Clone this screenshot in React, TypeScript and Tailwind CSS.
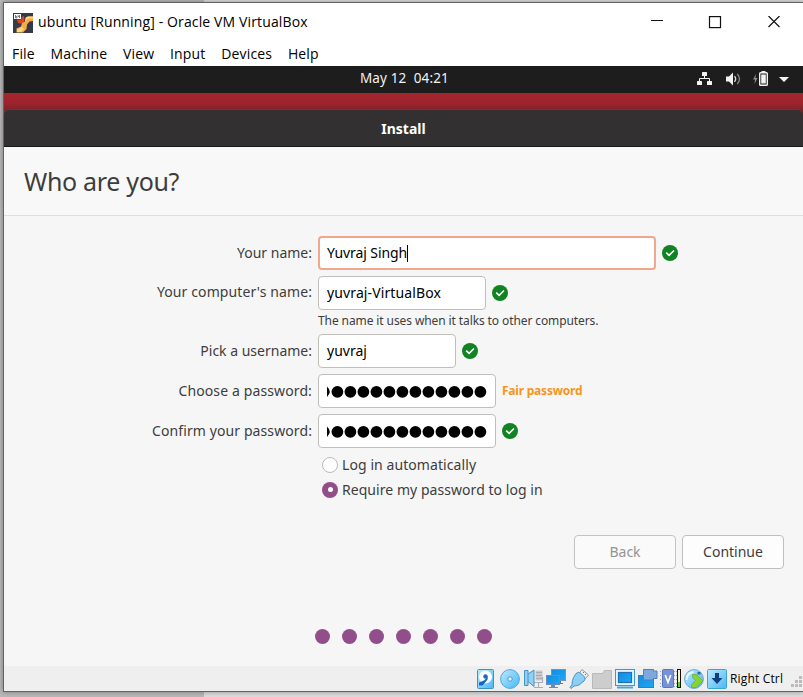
import React from "react";

const ui = "font-['Open_Sans','Noto_Sans',sans-serif]";
const ubuntu = "font-['Noto_Sans',sans-serif]";

function Check() {
  return (
    <svg width="16" height="16" viewBox="0 0 16 16" className="ml-1.5 shrink-0">
      <circle cx="8" cy="8" r="8" fill="#118322" />
      <path d="M4.2 7.7 7.1 10.3 12 5.5" fill="none" stroke="#fff" strokeWidth="1.6" />
    </svg>
  );
}

function VmIcon() {
  return (
    <svg width="20" height="20" viewBox="0 0 20 20">
      <rect width="20" height="20" fill="#343a48" />
      <path d="M4 6.5H8.5V4L11 3 11.5 8 9 10.5H6Q4 9.500 4 6.500Z" fill="#d9481f" />
      <path d="M9 10 12 8.500 12.500 4.500 15 3.500H20V8L16.500 8.500 14 11.500 13.500 16 10 19.500H3.500L3.500 15.500 8 13.500Z" fill="#f7ab45" />
      <path d="M13 4.500 15 3.500H20V5.500H15L12 9ZM4 16.500 9 14 11 16 8 19H4Z" fill="#ffd58a" />
      <rect x="1" y="1" width="7" height="5" fill="#fff" />
      <path d="M2.5 2V5H4V3.5H2.5M5 2V3.5H6.5M6.5 2V5" fill="none" stroke="#555" strokeWidth=".7" />
    </svg>
  );
}

function TrayIcons() {
  return (
    <svg width="94" height="18" viewBox="696 70 94 18" fill="#f2f2f2">
      <rect x="702" y="72" width="5" height="4" rx=".5" />
      <rect x="697" y="81" width="5" height="4" rx=".5" />
      <rect x="707" y="81" width="5" height="4" rx=".5" />
      <path d="M704.5 76v2.5M699.5 82v-3.5h10V82" fill="none" stroke="#f2f2f2" />
      <path d="M726 76.5h3l4-4v13l-4-4h-3z" />
      <path d="M734.5 76.2q2.400 2.800 0 5.600" fill="none" stroke="#ddd" strokeWidth="1.3" />
      <path d="M737.300 74q4.400 5 0 10" fill="none" stroke="#858585" strokeWidth="1.3" />
      <path d="M756 74l-3 5.5h2l-.5 4.5 3-6h-2z" fill="#8c8c8c" />
      <rect x="759.7" y="72.7" width="7.6" height="12.6" rx=".8" fill="none" stroke="#f2f2f2" strokeWidth="1.4" />
      <path d="M761.5 71h4v2h-4zM761.2 74.5h4.6v9h-4.6zM779 77h10l-5 5z" />
    </svg>
  );
}

function StatusIcons() {
  return (
    <svg width="250" height="24" viewBox="477 667 250 24">
      <defs>
        <linearGradient id="sky" x1="0" y1="0" x2="1" y2="1">
          <stop stopColor="#bdeafe" />
          <stop offset="1" stopColor="#48b8f3" />
        </linearGradient>
        <linearGradient id="blue" x1="0" y1="0" x2="1" y2="1">
          <stop stopColor="#168be0" />
          <stop offset="1" stopColor="#1aa9f5" />
        </linearGradient>
      </defs>
      <rect x="477.5" y="669.5" width="16" height="19" rx="1" fill="url(#sky)" stroke="#3c91ce" />
      <circle cx="485.5" cy="677" r="6.5" fill="#fff" />
      <circle cx="485.500" cy="676.500" r="2.200" fill="#1669c3" />
      <path d="M487.500 677q1 2-1.500 4.500l-3.500 4h-3.500v-3l5-2z" fill="#1669c3" />
      <circle cx="510" cy="679" r="9.4" fill="url(#sky)" stroke="#4ba8e0" />
      <circle cx="510" cy="679" r="2.2" fill="#eef8fd" stroke="#429bd3" />
      <path d="M535.5 670.5h7v10h-7z" fill="#c8cace" />
      <path d="M536 672.5h6M536 675.5h6M536 678.5h6M533.500 677v5.500h9V677M538.500 683v4M534 687.500h9" fill="none" stroke="#aaacaf" strokeWidth="1.1" />
      <path d="M524.500 670.500h3.500v3.500l6-4v16.500l-6-5v4h-3.500z" fill="#8fd1f4" stroke="#4a92bd" />
      <path d="M528 674v7.500" stroke="#4a92bd" />
      <rect x="551.5" y="669.5" width="14" height="11" fill="url(#blue)" stroke="#7591be" />
      <path d="M557 681h4v2h2v1h-7z" fill="#60769c" />
      <rect x="546.5" y="675.5" width="13" height="9" fill="url(#blue)" stroke="#6b8bbd" />
      <path d="M551 685h4v2h3v1h-9v-1h2z" fill="#7188b0" />
      <path d="M582 669.5 588.5 675 585.5 678.5 579.5 673z" fill="#eee" stroke="#999" />
      <path d="M583.5 672v1M585.5 674v1" stroke="#777" />
      <path d="M576 673.500q3-2.500 5 0l3.500 3.500q1.500 2-.5 4l-5 4q-3 1-5 1l-3 2.500-1-1 2-3q0-4 1.500-7z" fill="#8bcff5" stroke="#4f91c4" />
      <path d="M592.5 673.5h10l2-3h7v18h-19z" fill="#cdcdcd" stroke="#b9b9b9" />
      <rect x="615.5" y="669.5" width="19" height="16" fill="#e0f5ff" stroke="#3c99d8" />
      <path d="M617 687.5h16" stroke="#4ba4dd" strokeWidth="2" />
      <rect x="618.5" y="672.5" width="13" height="10" fill="url(#blue)" stroke="#2470b5" strokeWidth="1.2" />
      <rect x="638.5" y="675.5" width="15" height="12" fill="url(#blue)" stroke="#3e79bc" />
      <path d="M643.500 669.500h10v1.500h3.500v7.500h-3.500l-1 1.500h-9z" fill="#7ea9df" stroke="#527fbd" />
      <path d="M660 671.5h17M660 675.5h17M660 679.5h17M660 683.5h17M660 686.5h17" stroke="#8da5d7" strokeDasharray="1 1" />
      <rect x="662.5" y="669.5" width="11" height="18" rx="1" fill="#7593d5" stroke="#5878be" />
      <path d="M665.3 675 668 682.5 670.7 675" fill="none" stroke="#fff" strokeWidth="1.6" />
      <rect x="677.5" y="669.5" width="3" height="18" fill="#f5f3cc" stroke="#111" />
      <path d="M678 682h2v5h-2z" fill="#62d510" />
      <circle cx="694" cy="679" r="9.4" fill="url(#sky)" stroke="#6aa9d8" />
      <path d="M686.500 680q0-7 7-8" fill="none" stroke="#e7f8ff" strokeWidth="2" />
      <path d="M692.500 674.500h4l6.500 6.500-7 6.500h-4.500v-3l4-4-3-3z" fill="#89d330" stroke="#68aa42" strokeWidth=".7" />
      <path d="M697.500 672v2.500h3V672z" fill="#35669d" />
      <rect x="707.5" y="669.5" width="19" height="19" rx="1" fill="url(#sky)" stroke="#3ca4d8" />
      <path d="M715 673h4v5h3.5l-5.5 6-5.5-6h3.5z" fill="#103f7c" />
    </svg>
  );
}

const box = "flex items-center rounded-[4px] border border-[#c1bfbc] bg-white h-[34px] pl-2 text-black text-[14px] whitespace-nowrap";

function Label({ children, cls }: { children: React.ReactNode; cls: string }) {
  return (
    <div className="mr-1.5 flex w-[308px] shrink-0 justify-end whitespace-nowrap pb-0.5">
      <span className={cls}>{children}</span>
    </div>
  );
}

function Password() {
  return (
    <div className={box + " w-[178px] !pl-0"}>
      <svg width="176" height="14" viewBox="0 0 176 14">
        <path d="M8 2.500Q13.500 7.700 8 13z" />
        {Array.from({ length: 12 }, (_, i) => (
          <circle key={i} cx={18.4 + i * 13} cy="7.8" r="5.9" />
        ))}
      </svg>
    </div>
  );
}

export default function App() {
  return (
    <div className={`flex h-[697px] w-[803px] flex-col overflow-hidden bg-[linear-gradient(90deg,#b8b8b8_204px,#dcdcdc_204px)] ${ui}`}>
      <div className="h-0.5 shrink-0" />
      <div className="ml-[3px] flex h-[690px] shrink-0 flex-col border-y border-l border-[#626262] bg-[#f6f6f6] shadow-[0_0_5px_rgba(0,0,0,0.35)]">
        <div className="flex h-[39px] shrink-0 items-center bg-white pl-[9px] text-[14px] text-black">
          <VmIcon />
          <span className="ml-[5px] whitespace-nowrap pb-0.5 tracking-[0.13px]">ubuntu [Running] - Oracle VM VirtualBox</span>
          <svg className="ml-auto mr-[22px]" width="132" height="14" viewBox="0 0 132 14" fill="none" stroke="#111" strokeWidth="1.2">
            <path d="M2 4.500h12M119.500 0l11 11M130.500 0 119.500 11" />
            <rect x="60.5" y="0.6" width="11" height="11" />
          </svg>
        </div>
        <div className="flex h-6 shrink-0 items-center gap-[15.8px] bg-white pb-0.5 pl-2 text-[14px] tracking-[0.15px] text-black">
          <span>File</span><span>Machine</span><span>View</span><span>Input</span><span>Devices</span><span>Help</span>
        </div>
        <div className={`flex h-[27px] shrink-0 items-center bg-[#1d1d1d] text-[13.5px] text-[#f2f2f2] ${ubuntu}`}>
          <span className="ml-[356px] whitespace-pre pb-0.5 tracking-[0.13px]">May 12  04:21</span>
          <div className="ml-auto mr-[13px] pb-px"><TrayIcons /></div>
        </div>
        <div className="flex h-[54px] shrink-0 flex-col bg-[linear-gradient(#a5262e,#9d242d_10px,#80202a_17px)] pt-4">
          <div className={`flex h-[38px] items-center justify-center rounded-t-[6px] border-b border-t border-b-[#181818] border-t-[#484646] bg-[#323030] pt-px text-[14px] font-bold text-white ${ubuntu}`}>
            <span>Install</span>
          </div>
        </div>
        <div className={`flex h-[69px] shrink-0 items-center border-b border-[#dedede] bg-[#f8f8f8] pl-5 pt-0.5 text-[25px] tracking-[-0.32px] text-[#3d3d3d] ${ubuntu}`}>
          <span>Who are you?</span>
        </div>
        <div className={`flex h-[450px] shrink-0 flex-col pt-5 text-[14px] text-[#3d3d3d] ${ubuntu}`}>
          <div className="flex items-center">
            <Label cls="">Your name:</Label>
            <div className={box + " w-[338px] !border-2 !border-[#f0a78d] !pl-[7px] tracking-[-0.08px]"}>
              <span className="pb-0.5">Yuvraj Singh</span><i className="h-[17px] w-px bg-black" />
            </div>
            <Check />
          </div>
          <div className="mt-1.5 flex items-center">
            <Label cls="pb-0.5 tracking-[0.1px]">Your computer's name:</Label>
            <div className={box + " w-[168px] tracking-[0.12px]"}><span className="pb-0.5">yuvraj-VirtualBox</span></div>
            <Check />
          </div>
          <div className="flex h-6 items-center pl-[314px] pb-0.5 text-[12px] tracking-[-0.1px]"><span>The name it uses when it talks to other computers.</span></div>
          <div className="flex items-center">
            <Label cls="">Pick a username:</Label>
            <div className={box + " w-[138px]"}><span className="pb-0.5">yuvraj</span></div>
            <Check />
          </div>
          <div className="mt-1.5 flex items-center">
            <Label cls="tracking-[0.12px]">Choose a password:</Label>
            <Password />
            <span className="ml-1.5 text-[12px] font-bold tracking-[-0.22px] text-[#f79520]">Fair password</span>
          </div>
          <div className="mt-1.5 flex items-center">
            <Label cls="tracking-[0.1px]">Confirm your password:</Label>
            <Password />
            <Check />
          </div>
          <div className="mt-[4px] flex h-[25px] items-center pl-[318px]">
            <i className="h-4 w-4 rounded-full border border-[#bdbbb8] bg-white" />
            <span className="ml-1 tracking-[0.08px]">Log in automatically</span>
          </div>
          <div className="flex h-[25px] items-center pl-[318px]">
            <i className="flex h-4 w-4 items-center justify-center rounded-full bg-[#924d8b]"><i className="h-[5px] w-[5px] rounded-full bg-white" /></i>
            <span className="ml-1 tracking-[0.05px]">Require my password to log in</span>
          </div>
          <div className="mt-[33px] flex justify-end gap-1.5 pr-[19px]">
            <div className="flex h-[34px] w-[102px] items-center justify-center rounded-[4px] border border-[#c4c3c1] bg-[#fafafa] pb-0.5 text-[#949494]"><span>Back</span></div>
            <div className="flex h-[34px] w-[102px] items-center justify-center rounded-[4px] border border-[#c1bfbc] bg-[#fdfdfd] pb-0.5"><span>Continue</span></div>
          </div>
          <div className="mt-[60px] flex gap-3 pl-[311px]">
            {Array.from({ length: 7 }, (_, i) => <i key={i} className="h-[15px] w-[15px] rounded-full bg-[#924d8b]" />)}
          </div>
        </div>
        <div className="flex h-[25px] shrink-0 items-center bg-[#efefef] pl-[473px] text-[12px] text-black">
          <StatusIcons />
          <span className="ml-[3px] whitespace-nowrap tracking-[0.16px]">Right Ctrl</span>
          <svg className="ml-auto mt-1.5" width="12" height="12" fill="#bcbcbc">
            <path d="M8 0h3v3H8zM4 4h3v3H4zM8 4h3v3H8zM0 8h3v3H0zM4 8h3v3H4zM8 8h3v3H8z" />
          </svg>
        </div>
      </div>
    </div>
  );
}
